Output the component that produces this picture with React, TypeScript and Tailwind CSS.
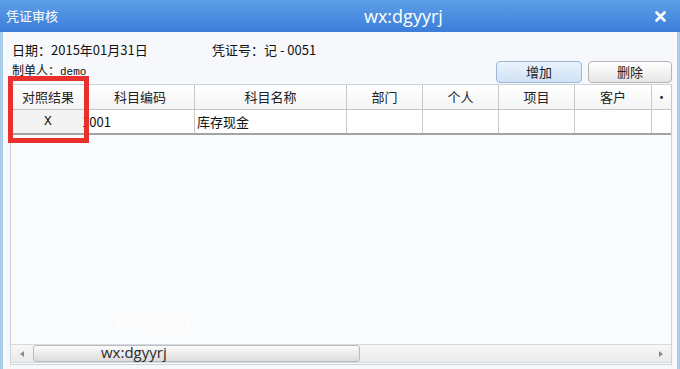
import React from "react";

const cols = [
  { title: "对照结果", w: 75 },
  { title: "科目编码", w: 109 },
  { title: "科目名称", w: 152 },
  { title: "部门", w: 76 },
  { title: "个人", w: 76 },
  { title: "项目", w: 76 },
  { title: "客户", w: 77 },
  { title: "·", w: 20 },
];

const row = ["X", "1001", "库存现金", "", "", "", "", ""];

const cjk = { fontFamily: '"Noto Sans CJK SC", "Noto Sans", sans-serif' };

export default function App() {
  return (
    <div className="relative flex h-[369px] w-[680px] flex-col overflow-hidden bg-[#f6f8fc]" style={cjk}>
      {/* title bar */}
      <div className="relative flex h-[32px] shrink-0 items-center justify-between bg-gradient-to-b from-[#5d9ee8] to-[#3c7ed8] pl-[6px] pr-[14px]">
        <span className="text-[13px] text-white">凭证审核</span>
        <span className="absolute left-[364px] top-[3px] text-[18px] text-white" style={{ fontFamily: '"Open Sans", sans-serif' }}>
          wx:dgyyrj
        </span>
        <svg width="11" height="11" viewBox="0 0 11 11">
          <path d="M1.5 1.5 L9.5 9.5 M9.5 1.5 L1.5 9.5" stroke="#fff" strokeWidth="2.6" strokeLinecap="round" />
        </svg>
      </div>

      {/* body */}
      <div className="flex flex-1 flex-col border-x-[3px] border-x-[#a9cbea] pl-[7px] pr-[5px]">
        {/* info + buttons */}
        <div className="flex h-[52px] shrink-0 items-end justify-between">
          <div className="flex flex-col self-start pt-[8px] pl-[2px] text-[13px] leading-[20px] text-[#111]">
            <div className="flex">
              <span className="w-[200px]">日期：2015年01月31日</span>
              <span>凭证号：记 - 0051</span>
            </div>
            <span className="text-[12px]">
              制单人：<span className="font-['Liberation_Mono'] text-[11px]">demo</span>
            </span>
          </div>
          <div className="mb-[1px] flex gap-[6px]">
            <button className="h-[22px] w-[86px] rounded-[4px] border border-[#9fb8d4] bg-gradient-to-b from-[#eaf3fc] to-[#cfe2f6] text-[13px] text-[#222]">
              增加
            </button>
            <button className="h-[22px] w-[84px] rounded-[4px] border border-[#b5b5b5] bg-gradient-to-b from-[#ffffff] to-[#e6e6e6] text-[13px] text-[#222]">
              删除
            </button>
          </div>
        </div>

        {/* grid */}
        <div className="relative flex h-[281px] flex-col border border-[#cdd3db] bg-[#fafbfd]">
          <div className="flex h-[25px] border-b border-[#c4c4c4] bg-gradient-to-b from-white to-[#f3f4f6]">
            {cols.map((c, i) => (
              <div
                key={i}
                className="flex shrink-0 items-center justify-center border-r border-[#c8c8c8] text-[13px] text-[#222]"
                style={{ width: c.w }}
              >
                {c.title}
              </div>
            ))}
          </div>
          <div className="flex h-[25px] border-b-[2px] border-[#a3a3a3] bg-white">
            {row.map((v, i) => (
              <div
                key={i}
                className={`flex shrink-0 items-center border-r border-[#c8c8c8] text-[13px] text-[#111] ${
                  i === 0
                    ? "justify-center bg-[#f3f3f3] font-['Liberation_Mono'] text-[13px]"
                    : i === 1
                    ? "ml-[-4px] pl-0"
                    : "pl-[2px]"
                }`}
                style={{ width: i === 1 ? cols[i].w + 4 : cols[i].w }}
              >
                {v}
              </div>
            ))}
          </div>
          <div className="flex-1" />
          {/* horizontal scrollbar */}
          <div className="mb-[1px] flex h-[19px] items-center border-y border-[#d6d9de] bg-gradient-to-b from-[#f7f7f7] to-[#eaeaea]">
            <div className="flex w-[22px] justify-center">
              <svg width="4" height="6" viewBox="0 0 4 6">
                <path d="M4 0 L0 3 L4 6 Z" fill="#8a8a8a" />
              </svg>
            </div>
            <div className="h-[17px] w-[327px] rounded-[3px] border border-[#b9bcc0] bg-gradient-to-b from-[#fbfbfb] to-[#dcdcdc]" />
            <div className="flex-1" />
            <div className="flex w-[20px] justify-center">
              <svg width="4" height="6" viewBox="0 0 4 6">
                <path d="M0 0 L4 3 L0 6 Z" fill="#8a8a8a" />
              </svg>
            </div>
          </div>
        </div>
      </div>

      {/* red highlight box */}
      <div className="absolute left-[8px] top-[76px] h-[67px] w-[81px] border-[5px] border-[#e8312c]" />

      {/* watermarks */}
      <span className="absolute left-[115px] top-[309px] text-[17px] text-white" style={{ fontFamily: '"Open Sans", sans-serif' }}>
        wx:dgyyrj
      </span>
      <span className="absolute left-[101px] top-[341px] text-[15px] text-[#2a2a2a]" style={{ fontFamily: '"Open Sans", sans-serif' }}>
        wx:dgyyrj
      </span>
    </div>
  );
}
